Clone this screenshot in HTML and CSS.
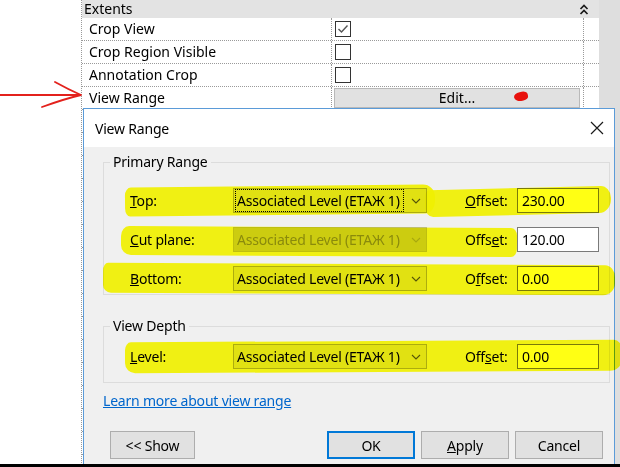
FILE: index.html
```html
<!DOCTYPE html>
<html lang="en">
<head>
    <meta charset="UTF-8">
    <meta name="viewport" content="width=device-width, initial-scale=1.0">
    <title>View Range</title>
    <link rel="stylesheet" href="styles.css">
</head>
<body>
    <div class="screen">
        <div class="gutter"></div>

        <div class="props">
            <div class="props-head">
                <span>Extents</span>
                <svg class="collapse" width="10" height="12" viewBox="0 0 10 12">
                    <path d="M1.5 6 L5 2.5 L8.5 6 M1.5 11 L5 7.5 L8.5 11" fill="none" stroke="#1a1a1a" stroke-width="1.7"/>
                </svg>
            </div>
            <div class="prop-row">
                <div class="prop-name">Crop View</div>
                <div class="prop-val">
                    <span class="check">
                        <svg width="14" height="14" viewBox="0 0 14 14"><path d="M2.5 7 L5.5 10 L11.5 3.5" fill="none" stroke="#555" stroke-width="1.4"/></svg>
                    </span>
                </div>
                <div class="prop-end"></div>
            </div>
            <div class="prop-row">
                <div class="prop-name">Crop Region Visible</div>
                <div class="prop-val"><span class="check"></span></div>
                <div class="prop-end"></div>
            </div>
            <div class="prop-row">
                <div class="prop-name">Annotation Crop</div>
                <div class="prop-val"><span class="check"></span></div>
                <div class="prop-end"></div>
            </div>
            <div class="prop-row">
                <div class="prop-name">View Range</div>
                <div class="prop-val"><span class="edit-btn">Edit...</span></div>
                <div class="prop-end"></div>
            </div>
            <!-- rows hidden behind the dialog -->
            <div class="prop-row blank"></div>
            <div class="prop-row blank"></div>
            <div class="prop-row blank"></div>
            <div class="prop-row blank"></div>
            <div class="prop-row blank"></div>
            <div class="prop-row blank"></div>
            <div class="prop-row blank"></div>
            <div class="prop-row blank"></div>
            <div class="prop-row blank"></div>
            <div class="prop-row blank"></div>
            <div class="prop-row blank"></div>
            <div class="prop-row blank"></div>
            <div class="prop-row blank"></div>
            <div class="prop-row blank"></div>
            <div class="prop-row blank"></div>
        </div>

        <div class="scroll-strip"></div>

        <svg class="red-arrow" width="90" height="34" viewBox="0 0 90 34">
            <path d="M0 17 L80 17 M55 4 C64 9 72 13 81 17 M42 29 C56 24 68 20 81 17" fill="none" stroke="#e3211c" stroke-width="1.8" stroke-linecap="round"/>
        </svg>
        <span class="red-dot"></span>

        <div class="dialog">
            <div class="dlg-title">
                <span>View Range</span>
                <svg width="14" height="14" viewBox="0 0 14 14">
                    <path d="M1 1 L13 13 M13 1 L1 13" fill="none" stroke="#1a1a1a" stroke-width="1.2"/>
                </svg>
            </div>
            <div class="dlg-body">
                <fieldset class="group primary">
                    <legend>Primary Range</legend>
                    <div class="range-row">
                        <label><u>T</u>op:</label>
                        <div class="combo"><span class="focus">Associated Level (ЕТАЖ 1)</span><svg width="10" height="6" viewBox="0 0 10 6"><path d="M1 1 L5 5 L9 1" fill="none" stroke="#555" stroke-width="1.1"/></svg></div>
                        <span></span>
                        <label><u>O</u>ffset:</label>
                        <div class="field">230.00</div>
                    </div>
                    <div class="range-row">
                        <label><u>C</u>ut plane:</label>
                        <div class="combo disabled"><span>Associated Level (ЕТАЖ 1)</span><svg width="10" height="6" viewBox="0 0 10 6"><path d="M1 1 L5 5 L9 1" fill="none" stroke="#a8a8a8" stroke-width="1.1"/></svg></div>
                        <span></span>
                        <label>Offs<u>e</u>t:</label>
                        <div class="field">120.00</div>
                    </div>
                    <div class="range-row">
                        <label><u>B</u>ottom:</label>
                        <div class="combo"><span>Associated Level (ЕТАЖ 1)</span><svg width="10" height="6" viewBox="0 0 10 6"><path d="M1 1 L5 5 L9 1" fill="none" stroke="#555" stroke-width="1.1"/></svg></div>
                        <span></span>
                        <label>O<u>f</u>fset:</label>
                        <div class="field">0.00</div>
                    </div>
                </fieldset>

                <fieldset class="group depth">
                    <legend>View Depth</legend>
                    <div class="range-row">
                        <label><u>L</u>evel:</label>
                        <div class="combo"><span>Associated Level (ЕТАЖ 1)</span><svg width="10" height="6" viewBox="0 0 10 6"><path d="M1 1 L5 5 L9 1" fill="none" stroke="#555" stroke-width="1.1"/></svg></div>
                        <span></span>
                        <label>Off<u>s</u>et:</label>
                        <div class="field">0.00</div>
                    </div>
                </fieldset>

                <a class="learn" href="#">Learn more about view range</a>

                <div class="dlg-buttons">
                    <button class="btn show">&lt;&lt; Show</button>
                    <span class="spacer"></span>
                    <button class="btn default">OK</button>
                    <button class="btn"><u>A</u>pply</button>
                    <button class="btn">Cancel</button>
                </div>
            </div>
        </div>

        <!-- marker highlights drawn over the dialog -->
        <span class="marker m-top-a"></span>
        <span class="marker m-top-b"></span>
        <span class="marker m-cut"></span>
        <span class="marker m-bot"></span>
        <span class="marker m-lvl"></span>

        <div class="bottom-edge"></div>
    </div>
</body>
</html>
```

FILE: styles.css
```css
body {
    margin: 0;
    background: #fff;
    font-family: 'Noto Sans', 'DejaVu Sans', sans-serif;
    font-size: 14px;
    color: #000;
}

.screen {
    position: relative;
    width: 620px;
    height: 467px;
    overflow: hidden;
    display: flex;
}

.gutter {
    width: 81px;
    flex: none;
}

/* properties palette */
.props {
    width: 518px;
    flex: none;
    border-left: 1px dotted #9a9a9a;
    box-sizing: border-box;
}

.props-head {
    height: 18px;
    background: #e3e3e3;
    display: flex;
    align-items: center;
    justify-content: space-between;
    padding: 0 10px 0 2px;
    line-height: 18px;
}

.collapse {
    display: block;
}

.prop-row {
    display: flex;
    height: 22px;
    border-bottom: 1px dotted #9a9a9a;
}

.prop-name {
    width: 250px;
    padding-left: 7px;
    box-sizing: border-box;
    border-right: 1px dotted #9a9a9a;
    line-height: 22px;
    white-space: nowrap;
}

.prop-val {
    width: 252px;
    box-sizing: border-box;
    border-right: 1px dotted #9a9a9a;
    display: flex;
    align-items: center;
    padding-left: 3px;
}

.prop-end {
    flex: 1;
}

.blank .prop-name,
.blank .prop-val {
    border-right: none;
}

.check {
    width: 16px;
    height: 16px;
    box-sizing: border-box;
    border: 1px solid #333;
    background: #fff;
    display: flex;
    align-items: center;
    justify-content: center;
}

.edit-btn {
    flex: 1;
    height: 20px;
    margin: 0 3px 0 -1px;
    background: #e1e1e1;
    border: 1px solid #b9b9b9;
    box-sizing: border-box;
    text-align: center;
    line-height: 18px;
}

.scroll-strip {
    flex: 1;
    background: #dedede;
}

.red-arrow {
    position: absolute;
    left: 0;
    top: 78px;
}

.red-dot {
    position: absolute;
    left: 514px;
    top: 92px;
    width: 14px;
    height: 9px;
    background: #e8110c;
    border-radius: 60% 50% 50% 70%;
    transform: rotate(-12deg);
}

/* dialog window */
.dialog {
    position: absolute;
    left: 83px;
    top: 108px;
    width: 532px;
    height: 357px;
    box-sizing: border-box;
    border: 1px solid #5b9bd8;
    background: #f0f0f0;
    display: flex;
    flex-direction: column;
    letter-spacing: -0.2px;
}

.dlg-title {
    height: 38px;
    flex: none;
    background: #fff;
    display: flex;
    align-items: center;
    justify-content: space-between;
    padding: 0 10px 0 11px;
}

.dlg-body {
    padding: 6px 4px 0 19px;
}

.group {
    margin: 0;
    border: 1px solid #dcdcdc;
    min-inline-size: 0;
}

.group legend {
    margin-left: -20px;
    padding: 0 3px;
    line-height: 18px;
}

.primary {
    padding: 17px 10px 3px 26px;
}

.depth {
    margin-top: 22px;
    padding: 9px 10px 13px 26px;
}

.range-row {
    display: grid;
    grid-template-columns: 103px 194px 1fr 52px 82px;
    align-items: center;
    height: 25px;
}

.range-row + .range-row {
    margin-top: 14px;
}

.range-row label {
    white-space: nowrap;
}

.combo {
    height: 25px;
    box-sizing: border-box;
    border: 1px solid #adadad;
    background: #e1e1e1;
    display: flex;
    align-items: center;
    justify-content: space-between;
    padding: 0 5px 0 3px;
    white-space: nowrap;
}

.combo .focus {
    outline: 1px dotted #000;
    outline-offset: 1px;
    padding-right: 2px;
}

.combo.disabled {
    background: #cccccc;
    border-color: #bfbfbf;
    color: #8a8a8a;
}

.field {
    height: 25px;
    box-sizing: border-box;
    border: 1px solid #7a7a7a;
    background: #fff;
    padding-left: 4px;
    line-height: 23px;
}

.learn {
    display: block;
    margin-top: 9px;
    width: max-content;
    line-height: 18px;
    color: #0066cc;
}

.dlg-buttons {
    display: flex;
    gap: 6px;
    margin-top: 21px;
    padding: 0 7px;
}

.spacer {
    flex: 1;
}

.btn {
    width: 88px;
    height: 28px;
    box-sizing: border-box;
    border: 1px solid #adadad;
    background: #e1e1e1;
    font-family: inherit;
    font-size: 14px;
    letter-spacing: inherit;
    color: #000;
    padding: 0;
}

.btn.show {
    width: 85px;
}

.btn.default {
    border: 2px solid #0078d7;
}

/* yellow marker strokes */
.marker {
    position: absolute;
    background: #ffff00;
    mix-blend-mode: multiply;
    opacity: 0.92;
}

.m-top-a {
    left: 125px;
    top: 186px;
    width: 310px;
    height: 29px;
    border-radius: 6px 12px 10px 5px / 8px 12px 12px 8px;
    transform: rotate(-0.6deg);
}

.m-top-b {
    left: 425px;
    top: 188px;
    width: 186px;
    height: 27px;
    border-radius: 4px 10px 12px 8px / 8px 12px 14px 10px;
    transform: rotate(-1.4deg);
}

.m-cut {
    left: 121px;
    top: 227px;
    width: 396px;
    height: 29px;
    border-radius: 8px 6px 6px 10px / 10px 8px 8px 10px;
    transform: rotate(0.3deg);
}

.m-bot {
    left: 103px;
    top: 264px;
    width: 512px;
    height: 30px;
    border-radius: 5px 10px 12px 8px / 8px 12px 12px 8px;
    transform: rotate(0.3deg);
}

.m-lvl {
    left: 125px;
    top: 341px;
    width: 497px;
    height: 31px;
    border-radius: 6px 8px 12px 10px / 8px 10px 12px 10px;
    transform: rotate(-0.3deg);
}

.bottom-edge {
    position: absolute;
    left: 0;
    right: 0;
    bottom: 0;
    height: 3px;
    background: #000;
}
```
